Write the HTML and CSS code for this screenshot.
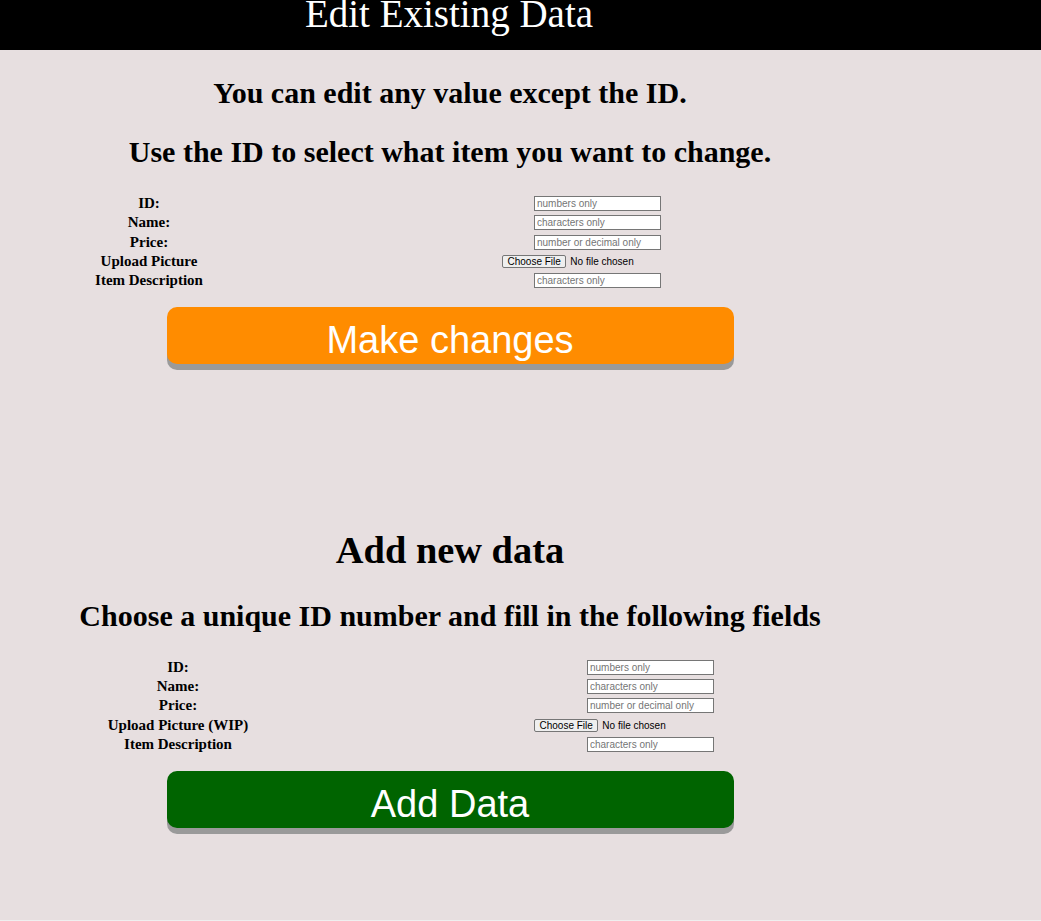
FILE: index.html
```html
<!DOCTYPE html>
<html lang="en">
<head>
<meta charset="utf-8">
<title>Edit Existing Data</title>
<link rel="stylesheet" href="styles.css">
</head>
<body>
<div class="page">
  <header class="topbar">
    <h1 class="title">Edit Existing Data</h1>
  </header>
  <main class="content">
    <section class="edit">
      <h2 class="note">You can edit any value except the ID.</h2>
      <h2 class="note">Use the ID to select what item you want to change.</h2>
      <form class="fields fields-edit">
        <label class="field-label" for="e-id">ID:</label>
        <input class="field-input" id="e-id" type="text" placeholder="numbers only">
        <label class="field-label" for="e-name">Name:</label>
        <input class="field-input" id="e-name" type="text" placeholder="characters only">
        <label class="field-label" for="e-price">Price:</label>
        <input class="field-input" id="e-price" type="text" placeholder="number or decimal only">
        <label class="field-label" for="e-pic">Upload Picture</label>
        <input class="field-file" id="e-pic" type="file">
        <label class="field-label" for="e-desc">Item Description</label>
        <input class="field-input" id="e-desc" type="text" placeholder="characters only">
      </form>
      <button class="action action-edit" type="button">Make changes</button>
    </section>
    <section class="add">
      <h1 class="section-title">Add new data</h1>
      <h2 class="note">Choose a unique ID number and fill in the following fields</h2>
      <form class="fields fields-add">
        <label class="field-label" for="a-id">ID:</label>
        <input class="field-input" id="a-id" type="text" placeholder="numbers only">
        <label class="field-label" for="a-name">Name:</label>
        <input class="field-input" id="a-name" type="text" placeholder="characters only">
        <label class="field-label" for="a-price">Price:</label>
        <input class="field-input" id="a-price" type="text" placeholder="number or decimal only">
        <label class="field-label" for="a-pic">Upload Picture (WIP)</label>
        <input class="field-file" id="a-pic" type="file">
        <label class="field-label" for="a-desc">Item Description</label>
        <input class="field-input" id="a-desc" type="text" placeholder="characters only">
      </form>
      <button class="action action-add" type="button">Add Data</button>
    </section>
  </main>
</div>
</body>
</html>
```

FILE: styles.css
```css
html, body {
  margin: 0;
  padding: 0;
}

body {
  background: #efefef;
  font-family: "Liberation Serif", "Times New Roman", serif;
  color: #000;
}

.page {
  background: #e7dfe0;
  padding-bottom: 92px;
}

.topbar {
  background: #000;
  height: 50px;
  overflow: visible;
}

.title {
  width: 898px;
  margin: 0;
  text-align: center;
  color: #fff;
  font-size: 39px;
  font-weight: normal;
  line-height: 28px;
}

.content {
  width: 900px;
  padding-top: 1px;
  text-align: center;
}

.note {
  font-size: 30px;
  font-weight: bold;
  line-height: normal;
  margin: 0.83em 0;
}

.add {
  padding-top: 163.5px;
}

.section-title {
  font-size: 38.4px;
  font-weight: bold;
  line-height: normal;
  margin: 0 0 27px;
}

.fields {
  display: grid;
  grid-auto-rows: 19.4px;
  align-items: center;
  text-align: center;
}

.fields-edit {
  grid-template-columns: 298px 599px;
}

.fields-add {
  grid-template-columns: 356px 589px;
}

.field-label {
  font-size: 15px;
  font-weight: bold;
  line-height: normal;
  text-align: center;
}

.field-input {
  justify-self: center;
  box-sizing: border-box;
  width: 127px;
  height: 15px;
  margin: 0;
  padding: 1px 2px;
  border: 1px solid #767676;
  background: #fff;
  font: 10px "Liberation Sans", Arial, sans-serif;
  color: #000;
}

.field-input::placeholder {
  color: #757575;
}

.field-file {
  justify-self: center;
  margin: 0;
  padding: 0;
  font: 10px "Liberation Sans", Arial, sans-serif;
  color: #000;
  text-align: left;
}

.fields-edit .field-file {
  width: 191px;
}

.fields-add .field-file {
  width: 233px;
}

.field-file::file-selector-button {
  font: 10px "Liberation Sans", Arial, sans-serif;
  height: 13.4px;
  line-height: 11px;
  padding: 0 4.5px;
  margin: 0 4px 0 0;
  border: 1px solid #767676;
  border-radius: 2px;
  background: #efefef;
  color: #000;
}

.action {
  display: block;
  box-sizing: border-box;
  width: 567px;
  height: 57px;
  margin: 16.5px auto 0;
  padding: 10px 0 0;
  border: none;
  border-radius: 10px;
  box-shadow: 0 6px 0 #9a9a9a;
  color: #fff;
  font: 38px "Liberation Sans", Arial, sans-serif;
  cursor: pointer;
}

.action-edit {
  background: #ff8c00;
}

.action-add {
  background: #006400;
}
```
